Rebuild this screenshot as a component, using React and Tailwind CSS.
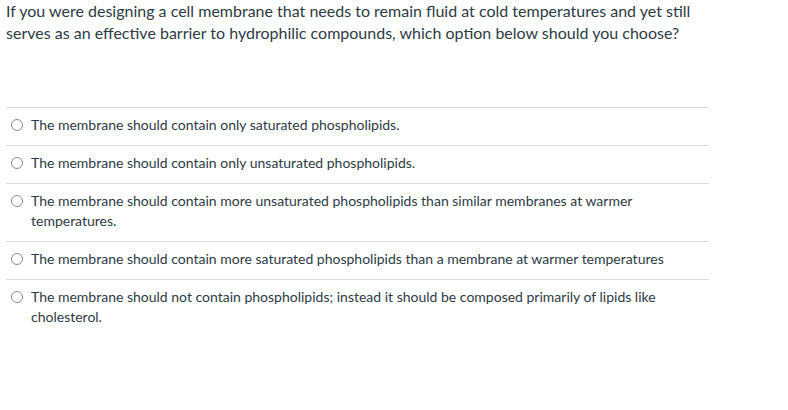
import React from 'react';

const options = [
  'The membrane should contain only saturated phospholipids.',
  'The membrane should contain only unsaturated phospholipids.',
  'The membrane should contain more unsaturated phospholipids than similar membranes at warmer temperatures.',
  'The membrane should contain more saturated phospholipids than a membrane at warmer temperatures',
  'The membrane should not contain phospholipids; instead it should be composed primarily of lipids like cholesterol.',
];

export default function App() {
  return (
    <div className="w-[788px] h-[410px] bg-white text-[#2d3b45] font-['Lato','Open_Sans',sans-serif]">
      <div className="pl-[6px] w-[712px] text-[16px] leading-[22px]">
        If you were designing a cell membrane that needs to remain fluid at cold temperatures and yet still serves as an effective barrier to hydrophilic compounds, which option below should you choose?
      </div>
      <div className="mt-[63px] ml-[6px] w-[703px]">
        {options.map((text, i) => (
          <label key={i} className="flex items-start border-t border-[#dcdcdc] pt-[7px] pb-[10px] text-[14px] leading-[20px]">
            <span className="mt-[4px] ml-[5px] mr-[8px] w-[12px] h-[12px] shrink-0 rounded-full border border-[#8a8a8a] bg-white" />
            <span className="pr-[28px]">{text}</span>
          </label>
        ))}
      </div>
    </div>
  );
}
